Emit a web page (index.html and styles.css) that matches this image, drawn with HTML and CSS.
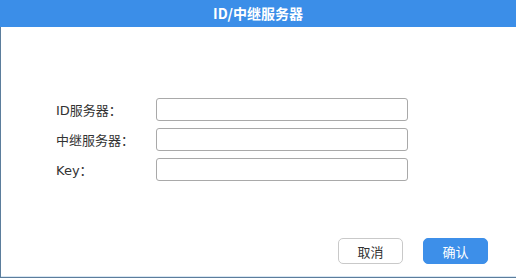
FILE: index.html
```html
<!DOCTYPE html>
<html lang="zh">
<head>
<meta charset="utf-8">
<title>ID/中继服务器</title>
<link rel="stylesheet" href="styles.css">
</head>
<body>
<div class="dialog">
  <div class="title-bar">ID/中继服务器</div>
  <div class="content">
    <div class="form">
      <div class="row"><label class="label">ID服务器：</label><input class="field" type="text"></div>
      <div class="row"><label class="label">中继服务器：</label><input class="field" type="text"></div>
      <div class="row"><label class="label">Key：</label><input class="field" type="text"></div>
    </div>
    <div class="footer">
      <button class="btn btn-cancel">取消</button>
      <button class="btn btn-ok">确认</button>
    </div>
  </div>
</div>
</body>
</html>
```

FILE: styles.css
```css
html, body {
  margin: 0;
  padding: 0;
  background: #ffffff;
}
body {
  font-family: "DejaVu Sans", "Noto Sans CJK SC", sans-serif;
  color: #333333;
}
.dialog {
  width: 516px;
  height: 278px;
  box-sizing: border-box;
  border-left: 1px solid #5b7d9c;
  border-bottom: 1px solid #5b7d9c;
  box-shadow: inset 0 -1px 0 #d7e6f3;
  display: flex;
  flex-direction: column;
  background: #fff;
}
.title-bar {
  height: 27px;
  flex: none;
  background: #3b8ee8;
  color: #ffffff;
  font-family: "Noto Sans CJK SC", sans-serif;
  font-weight: bold;
  font-size: 14px;
  line-height: 27px;
  text-align: center;
  margin-left: -1px;
}
.content {
  flex: 1;
  display: flex;
  flex-direction: column;
  justify-content: space-between;
  padding: 71px 28px 13px 55px;
}
.form {
  display: flex;
  flex-direction: column;
  gap: 8px;
}
.row {
  display: flex;
  align-items: center;
  height: 22px;
}
.label {
  width: 100px;
  flex: none;
  font-size: 13px;
  color: #333;
}
.field {
  width: 252px;
  height: 23px;
  box-sizing: border-box;
  border: 1px solid #a9a9a9;
  border-radius: 3px;
  padding: 0 4px;
  margin: 0;
  background: #fff;
  outline: none;
}
.footer {
  display: flex;
  justify-content: flex-end;
  gap: 20px;
}
.btn {
  width: 65px;
  height: 26px;
  box-sizing: border-box;
  border-radius: 5px;
  font-family: "Noto Sans CJK SC", sans-serif;
  font-size: 13px;
  padding: 0;
  margin: 0;
  cursor: pointer;
}
.btn-cancel {
  background: #ffffff;
  border: 1px solid #c9c9c9;
  color: #333;
}
.btn-ok {
  background: #3d8fe9;
  border: 1px solid #3d8fe9;
  color: #ffffff;
}
```
